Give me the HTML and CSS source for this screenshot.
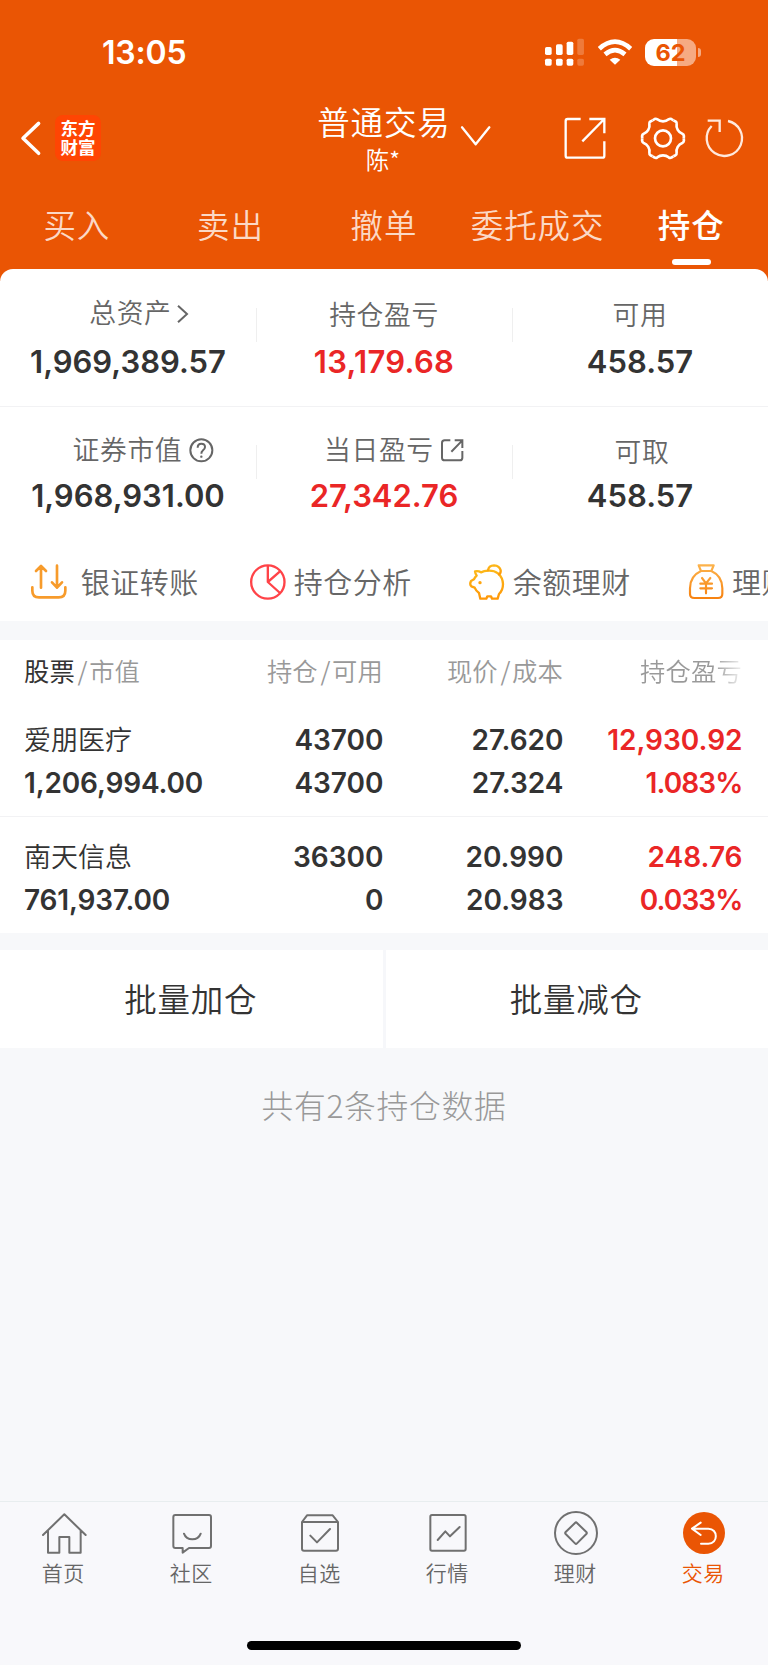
FILE: index.html
```html
<!DOCTYPE html>
<html lang="zh-CN">
<head>
<meta charset="utf-8">
<title>持仓</title>
<link rel="stylesheet" href="styles.css">
</head>
<body>
<div class="app">
  <header class="header">
    <div class="status">
      <span class="time">13:05</span>
      <div class="status-icons">
        <svg class="signal" viewBox="480 112 124 86" fill="#fff"><rect x="483" y="139" width="20" height="24" rx="5"/><rect x="516" y="131" width="20" height="32" rx="5"/><rect x="548" y="123" width="20" height="40" rx="5"/><rect x="580" y="114" width="20" height="49" rx="5" opacity=".22"/><rect x="483" y="174" width="20" height="21" rx="5"/><rect x="516" y="174" width="20" height="21" rx="5"/><rect x="548" y="174" width="20" height="21" rx="5"/><rect x="580" y="174" width="20" height="21" rx="5" opacity=".22"/></svg>
        <svg class="wifi" viewBox="638 112 108 86" fill="none" stroke="#fff" stroke-width="14"><path d="M645 144Q692 102 739 144M662 161Q692 136 722 161"/><path d="M676 177Q692 166 708 177L692 192Z" fill="#fff" stroke="none"/></svg>
        <div class="battery"><span class="battery-body">62</span><span class="battery-tip"></span></div>
      </div>
    </div>
    <div class="titlebar">
      <svg class="back" viewBox="56 360 70 110" fill="none" stroke="#fff" stroke-width="10.5" stroke-linecap="round" stroke-linejoin="round"><path d="M115 370L68 415L115 460"/></svg>
      <div class="logo"><span>东方</span><span>财富</span></div>
      <div class="title"><span class="title-main">普通交易</span><span class="title-sub">陈*</span></div>
      <svg class="caret" viewBox="230 370 96 66" fill="none" stroke="#fff" stroke-width="7" stroke-linecap="round" stroke-linejoin="round"><path d="M236 377L277 428L318 377"/></svg>
      <svg class="share" viewBox="538 350 132 132" fill="none" stroke="#fff" stroke-width="7"><path d="M591 359H552Q546 359 546 365V469Q546 475 552 475H656Q662 475 662 469V426M617 359H662V402M662 359L596 426"/></svg>
      <svg class="gear" viewBox="-69 -67 138 134" fill="none" stroke="#fff" stroke-width="8" stroke-linejoin="round"><defs><path id="tooth" d="M-31 -54L-25 -58Q-21 -60 -17 -57Q-10 -51 0 -51Q10 -51 17 -57Q21 -60 25 -58L31 -54"/></defs><use href="#tooth"/><use href="#tooth" transform="rotate(60)"/><use href="#tooth" transform="rotate(120)"/><use href="#tooth" transform="rotate(180)"/><use href="#tooth" transform="rotate(240)"/><use href="#tooth" transform="rotate(300)"/><circle r="24"/></svg>
      <svg class="refresh" viewBox="962 354 120 120" fill="none" stroke="#ffe9dd" stroke-width="7"><path d="M1034 363A53 53 0 1 1 985 378M973 362H1009V396"/></svg>
    </div>
    <nav class="tabs"><span>买入</span><span>卖出</span><span>撤单</span><span>委托成交</span><span class="on">持仓</span></nav>
  </header>

  <section class="card">
    <div class="stats first">
      <div class="stat"><div class="label asset">总资产<svg class="arrow" viewBox="530 98 38 60" fill="none" stroke="#666" stroke-width="6"><path d="M536 103L563 128L536 153"/></svg></div><div class="value">1,969,389.57</div></div>
      <div class="stat"><div class="label low">持仓盈亏</div><div class="value red wide">13,179.68</div></div>
      <div class="stat"><div class="label low">可用</div><div class="value">458.57</div></div>
    </div>
    <div class="stats second">
      <div class="stat"><div class="label market">证券市值<svg class="help" viewBox="565 502 74 74" fill="none" stroke="#666" stroke-width="6"><circle cx="602" cy="539" r="33"/><path d="M591 531Q591 519 602 519Q613 519 613 529Q613 535 606 540Q602 543 602 549"/><circle cx="602" cy="558" r="3.5" fill="#666" stroke="none"/></svg></div><div class="value">1,968,931.00</div></div>
      <div class="stat"><div class="label today">当日盈亏<svg class="help" viewBox="170 502 74 74" fill="none" stroke="#666" stroke-width="6"><path d="M201 509H184Q176 509 176 517V561Q176 569 184 569H229Q237 569 237 561V541M214 509H237V532M237 509L204 543"/></svg></div><div class="value red">27,342.76</div></div>
      <div class="stat"><div class="label low take">可取</div><div class="value">458.57</div></div>
    </div>
    <div class="actions">
      <div class="action transfer"><svg viewBox="92 101 108 108" fill="none" stroke="#f79b2b" stroke-width="8" stroke-linecap="round" stroke-linejoin="round"><path d="M96 171V181Q96 201 116 201H175Q195 201 195 181V171M122 172V107M107 122L122 107L137 122M170 106V172M155 156L170 172L185 156"/></svg><span>银证转账</span></div>
      <div class="action"><svg viewBox="750 101 108 108" fill="none" stroke="#ff4348" stroke-width="7"><circle cx="803.500" cy="155" r="50"/><path d="M803.500 105V155L840 188M803.500 155L840 123" stroke-linejoin="round"/></svg><span>持仓分析</span></div>
      <div class="action"><svg viewBox="256 101 108 108" fill="none" stroke="url(#gold)" stroke-width="7" stroke-linecap="round" stroke-linejoin="round"><defs><linearGradient id="gold" x1="0" y1="0" x2="0" y2="1"><stop offset="0" stop-color="#fcb718"/><stop offset="1" stop-color="#ff9808"/></linearGradient></defs><path d="M292 126Q284 121 274 123Q275 130 279 136Q274 140 271 147L262 152Q257 161 263 168L273 172Q277 182 286 188L290 205H308L311 198H322L325 205H342L346 191Q358 180 358 161Q357 141 343 129Q331 120 313 121Q301 122 292 126Z"/><path d="M313 120Q315 105 331 105Q348 106 351 120Q352 128 346 132"/><circle cx="289" cy="157" r="5" fill="#ffa50e" stroke="none"/></svg><span>余额理财</span></div>
      <div class="action"><svg viewBox="912 101 108 108" fill="none" stroke="url(#orange)" stroke-width="6.5" stroke-linecap="round" stroke-linejoin="round"><defs><linearGradient id="orange" gradientUnits="userSpaceOnUse" x1="0" y1="103" x2="0" y2="205"><stop offset="0" stop-color="#fcb34c"/><stop offset="1" stop-color="#f78210"/></linearGradient></defs><path d="M944 105H989L982 122H951ZM951 122Q918 137 918 174V190Q918 203 931 203H1002Q1015 203 1015 190V174Q1015 137 982 122M954 143L966 159L979 143M966 159V189M949 160H984M949 174H984"/></svg><span>理财</span></div>
    </div>
  </section>

  <section class="holdings">
    <div class="row head"><div class="name"><b>股票</b><i>/</i>市值</div><div>持仓<i>/</i>可用</div><div>现价<i>/</i>成本</div><div class="fade">持仓盈亏</div></div>
    <div class="row item"><div class="cn">爱朋医疗</div><div>43700</div><div>27.620</div><div class="red">12,930.92</div><div class="name">1,206,994.00</div><div>43700</div><div>27.324</div><div class="red rate">1.083%</div></div>
    <div class="row item last"><div class="cn">南天信息</div><div>36300</div><div>20.990</div><div class="red">248.76</div><div class="name">761,937.00</div><div>0</div><div>20.983</div><div class="red rate">0.033%</div></div>
  </section>

  <div class="batch"><div>批量加仓</div><div>批量减仓</div></div>
  <p class="summary">共有2条持仓数据</p>

  <footer class="tabbar">
    <div class="tabbar-items">
      <div class="tab"><svg viewBox="120 56 144 144"><path d="M129 134L193 72L257 134M144 121V187H178V140H208V187H242V121"/></svg><span>首页</span></div>
      <div class="tab"><svg viewBox="504 56 144 144"><path d="M526 74H627Q633 74 633 80V167Q633 173 627 173H567L548 187V173H526Q520 173 520 167V80Q520 74 526 74ZM552 130Q558 147 577 147Q596 147 602 130"/></svg><span>社区</span></div>
      <div class="tab"><svg viewBox="888 56 144 144"><path d="M906 95L921 75H998L1014 95V175Q1014 181 1008 181H912Q906 181 906 175ZM906 95H1014M931 136L951 156L990 116"/></svg><span>自选</span></div>
      <div class="tab"><svg viewBox="120 56 144 144"><rect x="139" y="74" width="106" height="107" rx="5"/><path d="M161 149L184 123L198 138L227 110"/></svg><span>行情</span></div>
      <div class="tab"><svg viewBox="504 56 144 144"><circle cx="576" cy="128" r="63"/><path d="M573 98Q576 94 579 98L607 125Q610 128 607 131L579 159Q576 162 573 159L545 131Q542 128 545 125Z"/></svg><span>理财</span></div>
      <div class="tab active"><svg viewBox="888 56 144 144"><circle class="disc" cx="960" cy="128" r="63"/><path class="turn" d="M950 97L924 115L950 134M924 115H973C1003 115 1003 160 973 160H951"/></svg><span>交易</span></div>
    </div>
    <div class="home-indicator"></div>
  </footer>
</div>
</body>
</html>
```
FILE: styles.css
```css
* { box-sizing: border-box; }
body { margin: 0; background: #f6f7fa; }
.app {
  width: 768px; height: 1665px; overflow: hidden;
  display: flex; flex-direction: column;
  font-family: "Noto Sans CJK SC", sans-serif; font-weight: 350; color: #333;
  background: #f7f8fa; white-space: nowrap;
}
svg { display: block; flex: none; overflow: visible; }
.red { color: #ea2626 !important; }

.header { height: 281px; flex: none; background: #ea5504; color: #fff; }
.status { height: 105px; display: flex; align-items: center; justify-content: space-between; padding: 0 67px 0 102px; }
.time { font: 600 32px/40px Inter, sans-serif; letter-spacing: -.2px; }
.status-icons { display: flex; align-items: center; gap: 12.300px; }
.signal { width: 41.300px; height: 28.700px; margin-right: -1px; }
.wifi { width: 36px; height: 28.700px; }
.battery { display: flex; align-items: center; gap: 2px; }
.battery-body { width: 51px; height: 27px; border-radius: 9px; background: linear-gradient(90deg, #fff 63%, #f6aa82 63%); color: #ea5504; font: 700 23.500px/27px Inter, sans-serif; text-align: center; }
.battery-tip { width: 3px; height: 9px; border-radius: 0 4px 4px 0; background: #f6aa82; }

.titlebar { height: 80px; display: flex; align-items: center; padding: 0 24px 0 18.700px; margin-top: -7px; }
.back { width: 23.300px; height: 36.700px; }
.logo { width: 46px; height: 46px; margin-left: 13px; border-radius: 8px; background: #ff4503; display: flex; flex-direction: column; align-items: center; justify-content: center; font-weight: 700; font-size: 17.500px; line-height: 19.500px; padding-bottom: 2px; }
.title { width: 132px; margin-left: 216.500px; display: flex; flex-direction: column; align-items: center; }
.title-main { font-size: 32.500px; line-height: 40px; letter-spacing: .8px; margin-right: -.8px; }
.title-sub { font-size: 23.500px; line-height: 35px; padding-top: 1px; margin: 0 1px -1px 0; }
.caret { width: 32px; height: 22px; margin: -4px 0 0 11px; }
.share { width: 44px; height: 44px; margin-left: auto; }
.gear { width: 46px; height: 44.700px; margin-left: 33.500px; }
.refresh { width: 40px; height: 40px; margin-left: 18px; }
.tabs { display: grid; grid-template-columns: repeat(5, 1fr); height: 91px; }
.tabs span { display: flex; flex-direction: column; align-items: center; font-size: 32.500px; line-height: 44px; padding-top: 24px; letter-spacing: .9px; color: #fbd9c6; }
.tabs .on { color: #fff; font-weight: 500; }
.tabs .on::after { content: ""; width: 39px; height: 6px; border-radius: 3px; background: #fff; margin-top: 13px; }

.card { height: 352px; flex: none; margin-top: -12px; background: #fff; border-radius: 13px 13px 0 0; overflow: hidden; }
.stats { display: grid; grid-template-columns: repeat(3, 256px); height: 137px; padding-top: 24px; }
.stats.first { border-bottom: 1px solid #f2f2f4; height: 138px; }
.stats.second { height: 136px; padding-top: 23px; }
.stat + .stat { background: linear-gradient(#efefef, #efefef) 0 15px / 1px 34px no-repeat; }
.stat { display: flex; flex-direction: column; align-items: center; }
.label { height: 51px; padding-top: 1px; display: flex; align-items: flex-start; font-size: 26.800px; line-height: 36px; letter-spacing: .6px; color: #666; }
.second .label { height: 48px; }
.label.low { padding-top: 3px; }
.label.take { padding-left: 4px; }
.label.asset { padding-left: 22px; }
.label.market { padding-left: 30px; }
.label.today { padding-left: 21px; }
.arrow { width: 12.700px; height: 20px; margin: 10px 0 0 4.500px; }
.help { width: 24.700px; height: 24.700px; margin: 7px 0 0 6.500px; }
.value { font: 600 31px/36px Inter, sans-serif; color: #333; }
.value.wide { letter-spacing: .3px; }

.actions { display: flex; align-items: center; height: 78px; padding-left: 30.700px; }
.action { display: flex; align-items: center; width: 219.200px; flex: none; gap: 7.800px; font-size: 29px; line-height: 40px; letter-spacing: .5px; color: #666; }
.action svg { width: 36px; height: 36px; }
.action span { margin-top: -3px; }
.transfer { gap: 14px; }

.holdings { height: 293px; flex: none; margin-top: 19px; background: #fff; }
.row { display: grid; grid-template-columns: 203px 156px 180px 179px; align-content: start; padding-left: 24px; text-align: right; }
.row > :first-child, .row .name { text-align: left; }
.head { height: 63px; line-height: 61px; font-size: 25.300px; letter-spacing: .2px; color: #999; }
.head b { font-weight: 400; color: #333; }
.head i { font-style: normal; padding: 0 1.500px 0 2.500px; }
.fade { background: linear-gradient(90deg, #999 84%, #f0f0f0 100%); -webkit-background-clip: text; background-clip: text; color: transparent; }
.item { height: 114px; padding-top: 15.500px; border-bottom: 1px solid #f2f2f4; font: 600 28px/43px Inter, sans-serif; }
.item > :not(:first-child):not(.name) { position: relative; left: .5px; }
.item .cn { font: 350 27px/40px "Noto Sans CJK SC", sans-serif; }
.item .name { letter-spacing: -.15px; }
.item .rate { letter-spacing: -.9px; }
.item.last { padding-top: 18.500px; border: 0; }

.batch { display: grid; grid-template-columns: 382.500px 1fr; gap: 3px; height: 98px; flex: none; margin-top: 17px; background: #f6f7fa; }
.batch div { background: #fff; text-align: center; font-size: 32.500px; line-height: 95px; letter-spacing: .8px; padding-right: 1px; }
.summary { margin: 34px 0 0; text-align: center; font-size: 31.800px; line-height: 44px; font-weight: 200; letter-spacing: .7px; color: #999; }

.tabbar { margin-top: auto; height: 164px; border-top: 1.500px solid #e8edef; background: #f8f8fb; }
.tabbar-items { display: grid; grid-template-columns: repeat(6, 128px); }
.tab { display: flex; flex-direction: column; align-items: center; padding-top: 6.500px; font-size: 21px; line-height: 30px; letter-spacing: .6px; color: #666; }
.tab span { margin-right: 1.500px; }
.tab svg { width: 48px; height: 48px; fill: none; stroke: #707070; stroke-width: 6; stroke-linecap: round; stroke-linejoin: round; }
.tab.active { color: #ea5504; }
.tab svg .disc { fill: #ea5504; stroke: none; }
.tab svg .turn { stroke: #fff; stroke-width: 6; }
.home-indicator { width: 274px; height: 9px; border-radius: 5px; background: #000; margin: 54px auto 0; }
```
